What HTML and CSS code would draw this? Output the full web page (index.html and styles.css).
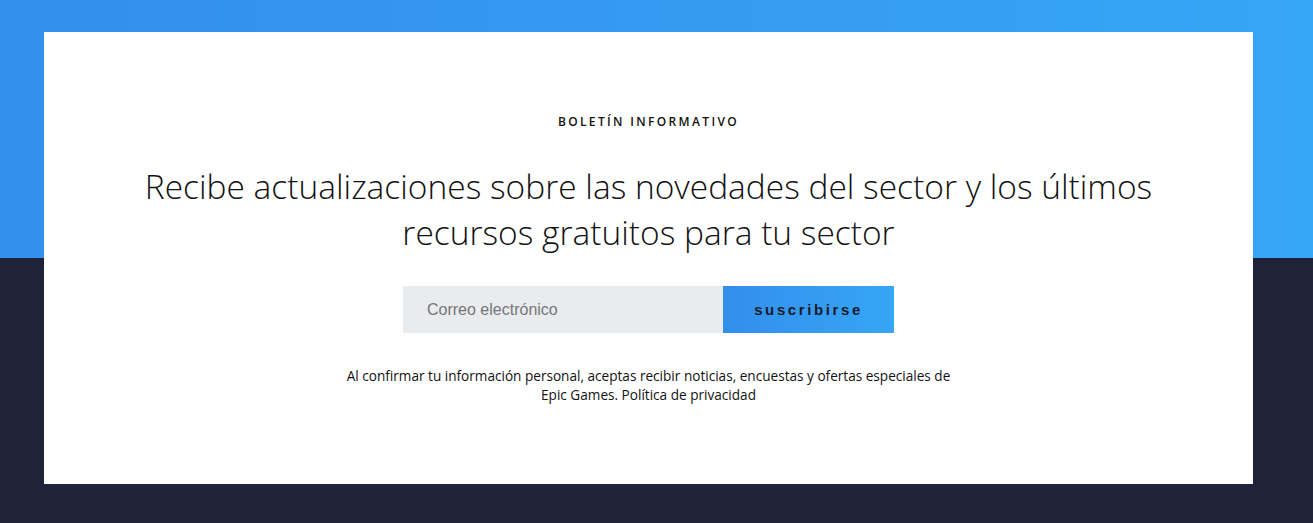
FILE: index.html
```html
<!DOCTYPE html>
<html lang="es">
<head>
<meta charset="utf-8">
<title>Boletín informativo</title>
<link rel="stylesheet" href="styles.css">
</head>
<body>
<section class="newsletter">
  <div class="card">
    <p class="eyebrow">BOLETÍN INFORMATIVO</p>
    <h2 class="headline">Recibe actualizaciones sobre las novedades del sector y los últimos recursos gratuitos para tu sector</h2>
    <form class="signup">
      <input class="email" type="email" placeholder="Correo electrónico">
      <button class="submit" type="button">suscribirse</button>
    </form>
    <p class="legal">Al confirmar tu información personal, aceptas recibir noticias, encuestas y ofertas especiales de Epic Games. <a href="#">Política de privacidad</a></p>
  </div>
</section>
</body>
</html>
```
FILE: styles.css
```css
html, body {
  margin: 0;
  padding: 0;
  background: #20223a;
}
.newsletter {
  height: 523px;
  box-sizing: border-box;
  padding: 32px 60px 39px 44px;
  background:
    linear-gradient(to right, #338eec, #36a6f6) top / 100% 258px no-repeat,
    #20223a;
}
.card {
  background: #ffffff;
  height: 100%;
  box-sizing: border-box;
  padding-top: 82px;
  display: flex;
  flex-direction: column;
  align-items: center;
  text-align: center;
  font-family: "Open Sans", sans-serif;
}
.eyebrow {
  margin: 0;
  font-size: 12px;
  line-height: 16px;
  font-weight: 600;
  letter-spacing: 2.35px;
  color: #121212;
}
.headline {
  margin: 33px 0 0;
  max-width: 1060px;
  font-size: 33.5px;
  line-height: 46px;
  font-weight: 300;
  color: #121212;
}
.signup {
  display: flex;
  margin-top: 31px;
}
.email {
  width: 320px;
  height: 47px;
  box-sizing: border-box;
  border: none;
  outline: none;
  background: #e9ecef;
  padding: 0 24px;
  font-family: "Liberation Sans", Arial, sans-serif;
  font-size: 16px;
  color: #333;
}
.email::placeholder {
  color: #757575;
}
.submit {
  width: 171px;
  height: 47px;
  border: none;
  background: linear-gradient(to right, #338eec, #36a6f6);
  font-family: "Liberation Sans", Arial, sans-serif;
  font-size: 15px;
  font-weight: 700;
  letter-spacing: 2.6px;
  color: #1b1b2b;
  cursor: pointer;
}
.legal {
  margin: 33px 0 0;
  max-width: 612px;
  font-size: 13.6px;
  line-height: 19px;
  color: #121212;
}
.legal a {
  color: inherit;
  text-decoration: none;
}
```
